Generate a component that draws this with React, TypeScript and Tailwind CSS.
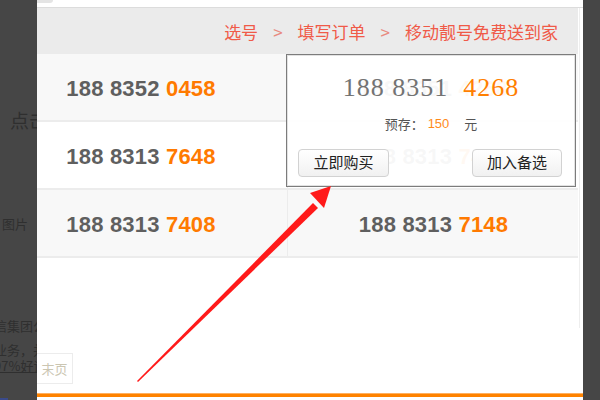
import React from "react";

const rows = [
  [
    ["188 8352", "0458"],
    ["188 8351", "4268"],
  ],
  [
    ["188 8313", "7648"],
    ["188 8313", "7468"],
  ],
  [
    ["188 8313", "7408"],
    ["188 8313", "7148"],
  ],
];

function Num({ head, tail }: { head: string; tail: string }) {
  return (
    <span className="text-[22px] font-bold tracking-[0.2px] text-[#5f5f5f] [font-family:'Liberation_Sans',Arial,sans-serif]">
      {head} <span className="text-[#ff7a00]">{tail}</span>
    </span>
  );
}

export default function App() {
  return (
    <div className="relative flex h-[400px] w-[600px] overflow-hidden bg-[#464646] [font-family:'Noto_Sans_CJK_SC',sans-serif]">
      {/* dimmed page behind the dialog */}
      <div className="relative flex w-[37px] shrink-0 flex-col overflow-hidden text-[#2f2f2f]">
        <div className="mt-[106px] ml-[10px] shrink-0 whitespace-nowrap text-[19px] leading-[28px]">点击</div>
        <div className="mt-[80px] ml-[2px] shrink-0 whitespace-nowrap text-[13px] leading-[20px]">图片</div>
        <div className="mt-[80px] -ml-[6px] shrink-0 whitespace-nowrap text-[13px] leading-[24px]">
          <div>信集团公</div>
          <div>业务，并</div>
          <div className="-mt-[8px] underline">97%好评</div>
        </div>
        <div className="mt-[20px] h-[2px] w-[8px] shrink-0 bg-[#3a4a8a]" />
      </div>

      <div className="relative flex w-[546px] shrink-0 flex-col bg-white">
        <div className="h-[8px] shrink-0 border-b border-[#dcdcdc]">
          <div className="h-[3px] w-[16px] rounded-br bg-[#e4e4e4]" />
        </div>
        <div className="flex h-[320px] w-[543px] shrink-0 items-start">
          <div className="flex-1">
            <div className="flex h-[46px] items-center justify-end gap-[15px] bg-[#ebebeb] pt-[2px] pr-[20px] text-[17px] text-[#f05a48]">
              <span>选号</span>
              <span className="text-[#e88a80]">&gt;</span>
              <span>填写订单</span>
              <span className="text-[#e88a80]">&gt;</span>
              <span>移动靓号免费送到家</span>
            </div>
            <div className="grid grid-cols-[250px_291px]">
              {rows.map((r, i) => (
                <React.Fragment key={i}>
                  <div
                    className={`flex h-[68px] items-center justify-center border-b-2 border-[#ececec] pt-[2px] pr-[42px] ${
                      i === 1 ? "bg-white" : "bg-[#f8f8f8]"
                    }`}
                  >
                    <Num head={r[0][0]} tail={r[0][1]} />
                  </div>
                  <div
                    className={`flex h-[68px] items-center justify-center border-b-2 border-l border-[#ececec] pt-[2px] pl-px ${
                      i === 1 ? "bg-white" : "bg-[#f8f8f8]"
                    }`}
                  >
                    <Num head={r[1][0]} tail={r[1][1]} />
                  </div>
                </React.Fragment>
              ))}
            </div>
          </div>
          <div className="ml-px h-full w-px bg-[#eeeeee]" />
        </div>

        <div className="mt-[25px] flex h-[31px] w-[36px] shrink-0 items-center justify-center border border-l-0 border-[#ececec] text-[13px] text-[#cbc6b2]">
          末页
        </div>
        <div className="mt-[9px] h-[4px] shrink-0 border-t border-[#ffb060] bg-[#ff8300]" />

        {/* number popup */}
        <div className="absolute top-[54px] left-[249px] flex h-[133px] w-[290px] flex-col items-center border border-[#7c7c7c] bg-white/[0.95] shadow-[inset_0_0_0_1px_#e2e2e2]">
          <div className="mt-[17px] text-[26px] leading-[32px] tracking-[1px] text-[#737373] [font-family:'Liberation_Serif',serif]">
            188 8351{"\u00a0\u00a0"}<span className="text-[#ff7f00]">4268</span>
          </div>
          <div className="mt-[10px] flex items-center text-[13px] text-[#555]">
            <span>预存：</span>
            <span className="ml-[4px] text-[#ff8a1a] [font-family:'Liberation_Sans',Arial,sans-serif]">150</span>
            <span className="ml-[15px]">元</span>
          </div>
          <div className="mt-[15px] flex w-full justify-between pr-[13px] pl-[11px]">
            <button className="h-[28px] w-[91px] rounded-[4px] border border-[#d2d2d2] bg-gradient-to-b from-white to-[#f1f1f1] text-[15px] text-[#222]">
              立即购买
            </button>
            <button className="h-[28px] w-[90px] rounded-[4px] border border-[#d2d2d2] bg-gradient-to-b from-white to-[#f1f1f1] text-[15px] text-[#222]">
              加入备选
            </button>
          </div>
        </div>
      </div>

      {/* annotation arrow */}
      <svg className="absolute inset-0" width="600" height="400" viewBox="0 0 600 400">
        <polygon points="137,381 313,203 318,208 138,382" fill="#ff1a1a" />
        <polygon points="331,186 310,193 324,208" fill="#ff1a1a" />
      </svg>
    </div>
  );
}
